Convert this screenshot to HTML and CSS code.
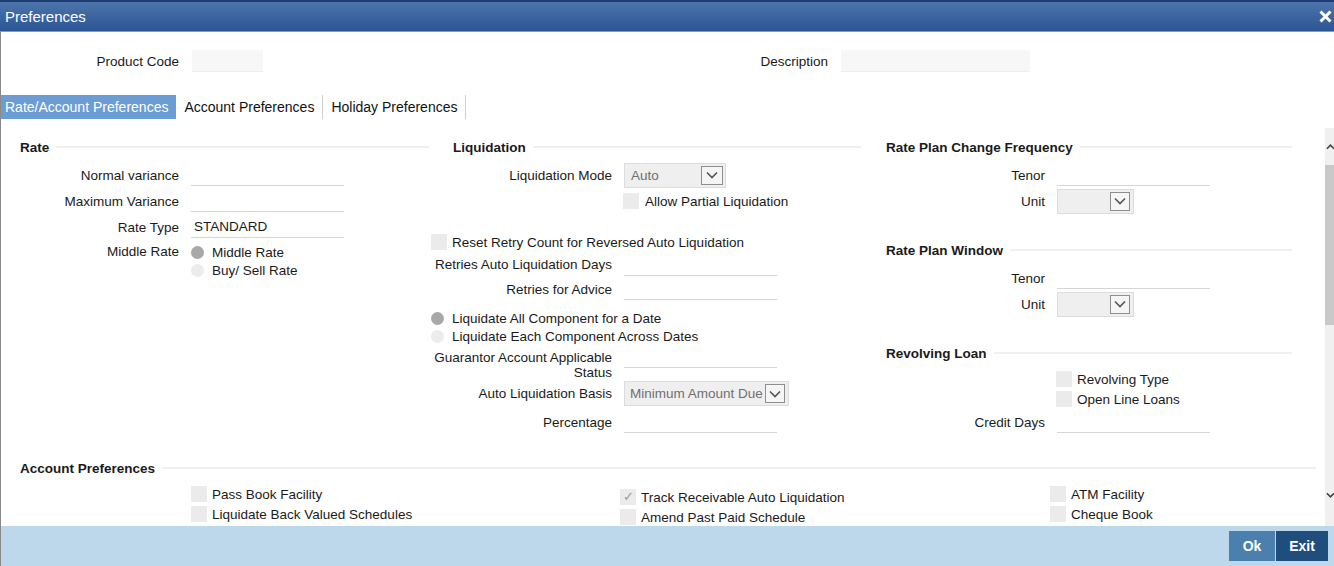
FILE: index.html
```html
<!DOCTYPE html>
<html lang="en">
<head>
  <meta charset="UTF-8" />
  <title>Preferences</title>
  <link rel="stylesheet" href="styles.css">
</head>
<body>
<div class="dialog">
  <div class="titlebar">
    <span>Preferences</span>
    <svg class="close" width="13" height="13" viewBox="0 0 13 13"><path d="M1.5 1.5 L11.5 11.5 M11.5 1.5 L1.5 11.5" stroke="#fff" stroke-width="3"/></svg>
  </div>

  <div class="main">
    <div class="head-fields">
      <label class="hf-label">Product Code</label>
      <div class="hf-input code"></div>
      <label class="hf-label desc-label">Description</label>
      <div class="hf-input desc"></div>
    </div>

    <div class="tabs">
      <div class="tab active">Rate/Account Preferences</div>
      <div class="tab sep">Account Preferences</div>
      <div class="tab sep">Holiday Preferences</div>
    </div>

    <div class="panel">
      <div class="panel-body">
        <div class="cols">
          <!-- Rate -->
          <div class="col col-rate">
            <div class="heading">Rate</div>
            <div class="row first"><label>Normal variance</label><div class="line-input"></div></div>
            <div class="row"><label>Maximum Variance</label><div class="line-input"></div></div>
            <div class="row"><label>Rate Type</label><div class="line-input">STANDARD</div></div>
            <div class="row radio-group">
              <label>Middle Rate</label>
              <div class="options">
                <div class="opt"><span class="rb on"></span>Middle Rate</div>
                <div class="opt"><span class="rb"></span>Buy/ Sell Rate</div>
              </div>
            </div>
          </div>

          <!-- Liquidation -->
          <div class="col col-liq">
            <div class="heading">Liquidation</div>
            <div class="row first"><label>Liquidation Mode</label>
              <div class="select mode"><span>Auto</span><span class="arrow"><svg width="12" height="8" viewBox="0 0 12 8"><polyline points="1,1.5 6,6.5 11,1.5" fill="none" stroke="#555" stroke-width="1.6"/></svg></span></div>
            </div>
            <div class="check-row indent"><span class="cb"></span>Allow Partial Liquidation</div>
            <div class="check-row reset"><span class="cb"></span>Reset Retry Count for Reversed Auto Liquidation</div>
            <div class="row short"><label>Retries Auto Liquidation Days</label><div class="line-input"></div></div>
            <div class="row"><label>Retries for Advice</label><div class="line-input"></div></div>
            <div class="opt liq-radio"><span class="rb on"></span>Liquidate All Component for a Date</div>
            <div class="opt"><span class="rb"></span>Liquidate Each Component Across Dates</div>
            <div class="row two-line"><label>Guarantor Account Applicable Status</label><div class="line-input"></div></div>
            <div class="row basis"><label>Auto Liquidation Basis</label>
              <div class="select wide"><span>Minimum Amount Due</span><span class="arrow"><svg width="12" height="8" viewBox="0 0 12 8"><polyline points="1,1.5 6,6.5 11,1.5" fill="none" stroke="#555" stroke-width="1.6"/></svg></span></div>
            </div>
            <div class="row pct"><label>Percentage</label><div class="line-input"></div></div>
          </div>

          <!-- Rate plan -->
          <div class="col col-plan">
            <div class="heading">Rate Plan Change Frequency</div>
            <div class="row first"><label>Tenor</label><div class="line-input"></div></div>
            <div class="row"><label>Unit</label>
              <div class="select unit"><span></span><span class="arrow"><svg width="12" height="8" viewBox="0 0 12 8"><polyline points="1,1.5 6,6.5 11,1.5" fill="none" stroke="#555" stroke-width="1.6"/></svg></span></div>
            </div>
            <div class="heading next">Rate Plan Window</div>
            <div class="row first"><label>Tenor</label><div class="line-input"></div></div>
            <div class="row"><label>Unit</label>
              <div class="select unit"><span></span><span class="arrow"><svg width="12" height="8" viewBox="0 0 12 8"><polyline points="1,1.5 6,6.5 11,1.5" fill="none" stroke="#555" stroke-width="1.6"/></svg></span></div>
            </div>
            <div class="heading next">Revolving Loan</div>
            <div class="check-row indent revolving"><span class="cb"></span>Revolving Type</div>
            <div class="check-row indent"><span class="cb"></span>Open Line Loans</div>
            <div class="row"><label>Credit Days</label><div class="line-input"></div></div>
          </div>
        </div>

        <div class="acct">
          <div class="heading">Account Preferences</div>
          <div class="acct-grid">
            <div>
              <div class="check-row"><span class="cb"></span>Pass Book Facility</div>
              <div class="check-row"><span class="cb"></span>Liquidate Back Valued Schedules</div>
            </div>
            <div class="mid">
              <div class="check-row"><span class="cb checked">&#10003;</span>Track Receivable Auto Liquidation</div>
              <div class="check-row"><span class="cb"></span>Amend Past Paid Schedule</div>
            </div>
            <div>
              <div class="check-row"><span class="cb"></span>ATM Facility</div>
              <div class="check-row"><span class="cb"></span>Cheque Book</div>
            </div>
          </div>
        </div>
      </div>

      <div class="scrollbar">
        <div class="sb-up"><svg width="9" height="7" viewBox="0 0 9 7"><polyline points="1,6 5,2 9,6" fill="none" stroke="#444" stroke-width="1.8"/></svg></div>
        <div class="sb-thumb"></div>
        <div class="sb-space"></div>
        <div class="sb-down"><svg width="9" height="7" viewBox="0 0 9 7"><polyline points="1,1 5,5 9,1" fill="none" stroke="#444" stroke-width="1.8"/></svg></div>
      </div>
    </div>
  </div>

  <div class="footer">
    <button class="btn ok">Ok</button>
    <button class="btn exit">Exit</button>
  </div>
</div>
</body>
</html>
```

FILE: styles.css
```css
body {
  margin: 0;
  font-family: "Liberation Sans", Arial, sans-serif;
  font-size: 13.5px;
  color: #1a1a1a;
  background: #fff;
  overflow: hidden;
}
.dialog {
  display: flex;
  flex-direction: column;
  height: 566px;
}
.titlebar {
  height: 32px;
  box-sizing: border-box;
  border-top: 2px solid #1d3d72;
  border-bottom: 1px solid #7f9db3;
  background: linear-gradient(#4d75ac, #2b5594);
  color: #fff;
  font-size: 15px;
  display: flex;
  align-items: center;
  padding: 0 2px 0 5px;
}
.titlebar .close { margin-left: auto; }

.main {
  flex: 1;
  min-height: 0;
  display: flex;
  flex-direction: column;
  border-left: 1px solid #8a8a8a;
}
.head-fields {
  display: flex;
  align-items: center;
  padding: 18px 0 23px;
}
.hf-label { width: 178px; text-align: right; margin-right: 13px; }
.desc-label { width: 565px; }
.hf-input {
  height: 22px;
  box-sizing: border-box;
  background: #f7f7f7;
  border-bottom: 1px solid #eee;
}
.hf-input.code { width: 71px; }
.hf-input.desc { width: 189px; }

.tabs {
  display: flex;
  height: 24px;
  font-size: 14px;
}
.tab {
  line-height: 24px;
  padding: 0 8px;
  color: #111;
}
.tab.active {
  background: #6c9cd4;
  color: #fff;
  padding: 0 8px 0 4px;
}
.tab.sep { border-right: 1px solid #cfcfcf; }

.panel {
  flex: 1;
  min-height: 0;
  display: flex;
  overflow: hidden;
}
.panel-body {
  flex: 1;
  padding-top: 18px;
}
.cols { display: flex; }
.col { box-sizing: border-box; }
.col-rate { width: 430px; padding: 0 2px 0 19px; --lw: 159px; --gap: 12px; }
.col-liq { width: 432px; padding-right: 2px; --lw: 181px; --gap: 12px; }
.col-plan { width: 432px; padding-right: 3px; --lw: 182px; --gap: 12px; }
.col-liq .heading { padding-left: 22px; }
.col-plan .heading { padding-left: 23px; }

.heading {
  display: flex;
  align-items: center;
  height: 20px;
  font-weight: bold;
}
.heading::after {
  content: "";
  flex: 1;
  height: 2px;
  background: #f0f0f0;
  margin-left: 7px;
}
.heading.next { margin-top: 26px; }

.row {
  display: flex;
  align-items: center;
  height: 26px;
}
.row.first { margin-top: 5px; }
.row label {
  width: var(--lw);
  text-align: right;
  margin-right: var(--gap);
  flex-shrink: 0;
}
.line-input {
  width: 153px;
  height: 22px;
  line-height: 22px;
  box-sizing: border-box;
  border-bottom: 1px solid #d6d6d6;
  padding-left: 3px;
}
.row.short { height: 23px; }
.row.two-line {
  height: 31px;
  align-items: flex-start;
  margin-top: 5px;
  line-height: 15px;
}
.row.two-line .line-input { height: 18px; }
.row.basis { height: 25px; }
.row.pct { margin-top: 3px; }

.select {
  display: flex;
  align-items: center;
  height: 25px;
  box-sizing: border-box;
  background: #efefef;
  border: 1px solid #dcdcdc;
  color: #707070;
  padding-left: 6px;
}
.select .arrow {
  margin-left: auto;
  width: 20px;
  height: 19px;
  box-sizing: border-box;
  border: 1px solid #8e8e8e;
  background: #f5f5f5;
  display: flex;
  align-items: center;
  justify-content: center;
}
.select.mode { width: 102px; }
.select.mode .arrow { margin-right: 2px; width: 22px; }
.select.unit { width: 77px; }
.select.unit .arrow { margin-right: 3px; }
.select.wide { width: 165px; padding-left: 5px; }
.select.wide .arrow { margin-left: 2px; margin-right: 3px; }

.radio-group {
  height: auto;
  align-items: flex-start;
  margin-top: 3px;
}
.radio-group label { line-height: 18px; }
.opt {
  display: flex;
  align-items: center;
  height: 18px;
}
.rb {
  width: 13px;
  height: 13px;
  border-radius: 50%;
  background: #ececec;
  margin-right: 8px;
}
.rb.on { background: #a8a8a8; }
.liq-radio { margin-top: 7px; }

.check-row {
  display: flex;
  align-items: center;
  height: 20px;
}
.cb {
  width: 16px;
  height: 16px;
  background: #ebebeb;
  margin-right: 5px;
  font-size: 13px;
  line-height: 16px;
  text-align: center;
  color: #9a9a9a;
}
.col-liq .check-row.indent { height: 26px; padding-left: 192px; }
.col-liq .check-row.indent .cb { margin-right: 6px; }
.check-row.reset { height: 22px; margin-top: 17px; }
.col-plan .check-row.indent { padding-left: 193px; }
.check-row.revolving { margin-top: 6px; }

.acct { padding: 0 9px 0 19px; margin-top: 23px; }
.acct-grid {
  display: grid;
  grid-template-columns: 429px 430px 1fr;
  padding-left: 171px;
  margin-top: 6px;
}
.acct-grid .mid { padding-top: 3px; }

.scrollbar {
  width: 9px;
  margin-top: 9px;
  background: #f0f0f0;
  display: flex;
  flex-direction: column;
}
.sb-up { height: 37px; display: flex; align-items: center; padding-left: 1px; }
.sb-thumb { height: 160px; background: #c9c9c9; }
.sb-space { flex: 1; }
.sb-down { height: 34px; display: flex; align-items: flex-start; padding-left: 1px; }

.footer {
  height: 40px;
  background: #bdd7eb;
  border-left: 1px solid #8a8a8a;
  display: flex;
  justify-content: flex-end;
  align-items: center;
  padding-right: 6px;
}
.btn {
  height: 30px;
  border: none;
  color: #fff;
  font-family: "Liberation Sans", Arial, sans-serif;
  font-weight: bold;
  font-size: 14px;
  padding: 0;
}
.btn.ok { width: 46px; background: #4a7fae; margin-right: 1px; }
.btn.exit { width: 52px; background: #1f4e7c; }
```
